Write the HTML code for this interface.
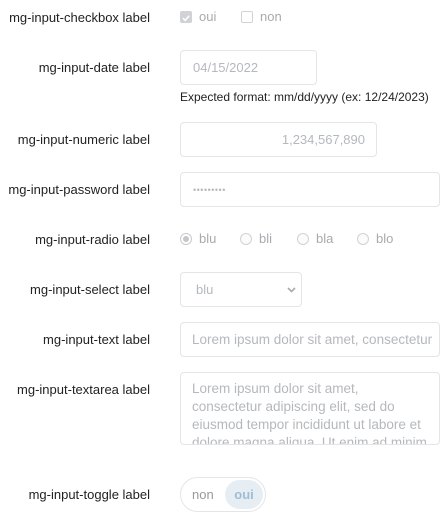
<!DOCTYPE html>
<html><head><style>
body{margin:0;width:440px;height:527px;background:#fff;font-family:"Liberation Sans",sans-serif;position:relative;overflow:hidden}
.l{position:absolute;right:290px;font-size:13px;color:#222;line-height:16px;white-space:nowrap;top:0}
.b{position:absolute;left:180px;border:1px solid #e3e5e8;border-radius:4px;box-sizing:border-box;font-size:13px;color:#b5b8bc;overflow:hidden}
.t{position:absolute;font-size:13px;color:#a7aaae;line-height:16px}
.rd{position:absolute;width:12px;height:12px;border:1px solid #cfd2d6;border-radius:50%;box-sizing:border-box;background:#fbfbfb}
</style></head><body>
<div class="l" style="top:10px">mg-input-checkbox label</div>
<div style="position:absolute;left:180px;top:11px;width:12px;height:12px;border-radius:2px;background:#d0d2d5"><svg width="12" height="12"><path d="M3 6.2L5.2 8.4 9.2 3.8" stroke="#fff" stroke-width="1.5" fill="none"/></svg></div>
<div class="t" style="left:199px;top:9px">oui</div>
<div style="position:absolute;left:241px;top:11px;width:12px;height:12px;border:1px solid #cfd2d6;border-radius:2px;box-sizing:border-box"></div>
<div class="t" style="left:260px;top:9px">non</div>

<div class="l" style="top:60px">mg-input-date label</div>
<div class="b" style="top:50px;width:137px;height:35px;padding:9px 0 0 12px">04/15/2022</div>
<div style="position:absolute;left:180px;top:90px;font-size:12px;color:#222;white-space:nowrap">Expected format: mm/dd/yyyy (ex: 12/24/2023)</div>

<div class="l" style="top:132px">mg-input-numeric label</div>
<div class="b" style="top:122px;width:197px;height:35px;padding:9px 11px 0 0;text-align:right">1,234,567,890</div>

<div class="l" style="top:182px">mg-input-password label</div>
<div class="b" style="top:172px;width:260px;height:35px;padding:8px 0 0 12px;font-size:9px;letter-spacing:0.5px;line-height:18px">•••••••••</div>

<div class="l" style="top:232px">mg-input-radio label</div>
<div class="rd" style="left:180px;top:233px;border-color:#c8cacd;background:#fff"><div style="width:6px;height:6px;border-radius:50%;background:#c4c6c9;margin:2px"></div></div>
<div class="t" style="left:199px;top:231px">blu</div>
<div class="rd" style="left:240px;top:233px"></div><div class="t" style="left:259px;top:231px">bli</div>
<div class="rd" style="left:297px;top:233px"></div><div class="t" style="left:316px;top:231px">bla</div>
<div class="rd" style="left:357px;top:233px"></div><div class="t" style="left:376px;top:231px">blo</div>

<div class="l" style="top:282px">mg-input-select label</div>
<div class="b" style="top:272px;width:122px;height:35px;padding:9px 0 0 15px">blu<svg style="position:absolute;right:5px;top:14px" width="9" height="6"><path d="M1 1L4.5 4.5 8 1" stroke="#aaa" stroke-width="1.6" fill="none"/></svg></div>

<div class="l" style="top:332px">mg-input-text label</div>
<div class="b" style="top:322px;width:260px;height:35px;padding:9px 0 0 11px;white-space:nowrap;font-size:13.5px">Lorem ipsum dolor sit amet, consectetur</div>

<div class="l" style="top:382px">mg-input-textarea label</div>
<div class="b" style="top:372px;width:260px;height:73px;padding:7px 0 0 11px;line-height:18px;white-space:nowrap;font-size:13.5px">Lorem ipsum dolor sit amet,<br>consectetur adipiscing elit, sed do<br>eiusmod tempor incididunt ut labore et<br>dolore magna aliqua. Ut enim ad minim</div>

<div class="l" style="top:487px">mg-input-toggle label</div>
<div style="position:absolute;left:180px;top:477px;width:86px;height:35px;border:1px solid #e3e5e8;border-radius:18px;box-sizing:border-box">
<div class="t" style="left:11px;top:9px;color:#999">non</div>
<div style="position:absolute;left:44px;top:2px;width:38px;height:29px;border-radius:15px;background:#e6eef4;color:#9fbdd6;font-size:13px;font-weight:bold;text-align:center;line-height:29px">oui</div>
</div>
</body></html>
